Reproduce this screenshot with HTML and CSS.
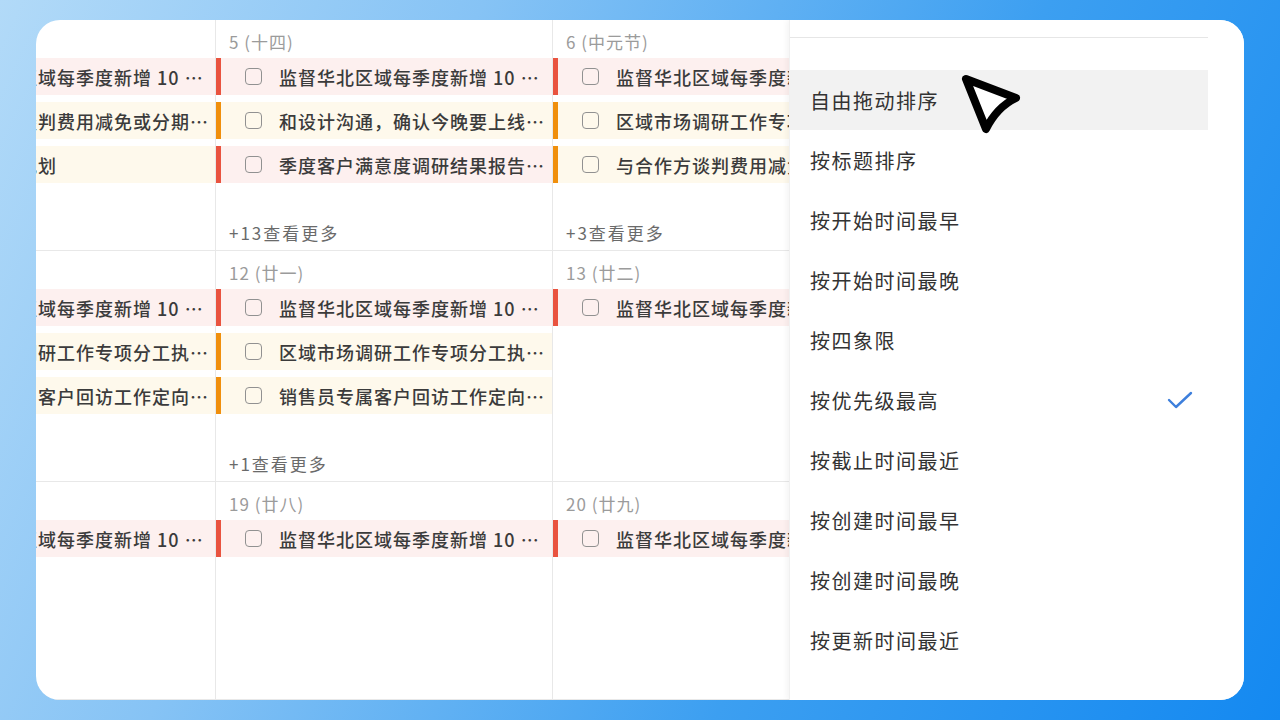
FILE: index.html
```html
<!DOCTYPE html>
<html>
<head>
  <meta charset="UTF-8">
  <title>日历视图 - 排序</title>
  <link rel="stylesheet" href="styles.css">
</head>
<body>
  <div class="card">
    <!-- Calendar month grid -->
    <div class="calendar">
      <!-- Week 1 -->
      <div class="day day-clipped">
        <div class="day-inner">
          <div class="day-title">4 (十三)</div>
          <div class="task task-red"><span class="checkbox"></span><span class="task-text">监督华北区域每季度新增 10 个客户</span></div>
          <div class="task task-orange"><span class="checkbox"></span><span class="task-text">与合作方谈判费用减免或分期付款</span></div>
          <div class="task task-orange"><span class="checkbox"></span><span class="task-text">年度销售规划</span></div>
        </div>
      </div>
      <div class="day">
        <div class="day-inner">
          <div class="day-title">5 (十四)</div>
          <div class="task task-red"><span class="checkbox"></span><span class="task-text">监督华北区域每季度新增 10 个客户</span></div>
          <div class="task task-orange"><span class="checkbox"></span><span class="task-text">和设计沟通，确认今晚要上线的需求</span></div>
          <div class="task task-red"><span class="checkbox"></span><span class="task-text">季度客户满意度调研结果报告整理</span></div>
          <div class="more">+13查看更多</div>
        </div>
      </div>
      <div class="day day-under-menu">
        <div class="day-inner">
          <div class="day-title">6 (中元节)</div>
          <div class="task task-red"><span class="checkbox"></span><span class="task-text">监督华北区域每季度新增 10 个客户</span></div>
          <div class="task task-orange"><span class="checkbox"></span><span class="task-text">区域市场调研工作专项分工执行方案</span></div>
          <div class="task task-orange"><span class="checkbox"></span><span class="task-text">与合作方谈判费用减免或分期付款</span></div>
          <div class="more">+3查看更多</div>
        </div>
      </div>

      <!-- Week 2 -->
      <div class="day day-clipped">
        <div class="day-inner">
          <div class="day-title">11 (二十)</div>
          <div class="task task-red"><span class="checkbox"></span><span class="task-text">监督华北区域每季度新增 10 个客户</span></div>
          <div class="task task-orange"><span class="checkbox"></span><span class="task-text">区域市场调研工作专项分工执行方案</span></div>
          <div class="task task-orange"><span class="checkbox"></span><span class="task-text">销售员专属客户回访工作定向跟进</span></div>
        </div>
      </div>
      <div class="day">
        <div class="day-inner">
          <div class="day-title">12 (廿一)</div>
          <div class="task task-red"><span class="checkbox"></span><span class="task-text">监督华北区域每季度新增 10 个客户</span></div>
          <div class="task task-orange"><span class="checkbox"></span><span class="task-text">区域市场调研工作专项分工执行方案</span></div>
          <div class="task task-orange"><span class="checkbox"></span><span class="task-text">销售员专属客户回访工作定向跟进</span></div>
          <div class="more">+1查看更多</div>
        </div>
      </div>
      <div class="day day-under-menu">
        <div class="day-inner">
          <div class="day-title">13 (廿二)</div>
          <div class="task task-red"><span class="checkbox"></span><span class="task-text">监督华北区域每季度新增 10 个客户</span></div>
        </div>
      </div>

      <!-- Week 3 -->
      <div class="day day-clipped">
        <div class="day-inner">
          <div class="day-title">18 (廿七)</div>
          <div class="task task-red"><span class="checkbox"></span><span class="task-text">监督华北区域每季度新增 10 个客户</span></div>
        </div>
      </div>
      <div class="day">
        <div class="day-inner">
          <div class="day-title">19 (廿八)</div>
          <div class="task task-red"><span class="checkbox"></span><span class="task-text">监督华北区域每季度新增 10 个客户</span></div>
        </div>
      </div>
      <div class="day day-under-menu">
        <div class="day-inner">
          <div class="day-title">20 (廿九)</div>
          <div class="task task-red"><span class="checkbox"></span><span class="task-text">监督华北区域每季度新增 10 个客户</span></div>
        </div>
      </div>
    </div>

    <!-- Sort menu -->
    <div class="sort-menu">
      <div class="menu-divider"></div>
      <div class="menu-list">
        <div class="menu-item hover">自由拖动排序</div>
        <div class="menu-item">按标题排序</div>
        <div class="menu-item">按开始时间最早</div>
        <div class="menu-item">按开始时间最晚</div>
        <div class="menu-item">按四象限</div>
        <div class="menu-item">
          <span>按优先级最高</span>
          <svg class="check" width="26" height="20" viewBox="0 0 26 20">
            <polyline points="2,10 9,17 24,3" fill="none" stroke="#3d7fdc" stroke-width="2.4" stroke-linecap="round" stroke-linejoin="round"/>
          </svg>
        </div>
        <div class="menu-item">按截止时间最近</div>
        <div class="menu-item">按创建时间最早</div>
        <div class="menu-item">按创建时间最晚</div>
        <div class="menu-item">按更新时间最近</div>
      </div>
    </div>
  </div>

  <!-- Mouse pointer -->
  <svg class="pointer" width="80" height="75" viewBox="0 0 80 75">
    <path d="M16 14 L66 33 Q47 42 36 64 Z" fill="#fff" stroke="#000" stroke-width="8" stroke-linejoin="round"/>
  </svg>
</body>
</html>
```

FILE: styles.css
```css
body {
  margin: 0;
  padding: 20px 36px;
  height: 720px;
  box-sizing: border-box;
  font-family: "Noto Sans CJK SC", "Noto Sans", sans-serif;
  background: linear-gradient(115deg, #b2daf8 0%, #86c3f5 30%, #3c9ff1 65%, #1489f1 100%);
  overflow: hidden;
}

/* Card */
.card {
  height: 680px;
  background: #fff;
  border-radius: 24px;
  overflow: hidden;
  display: flex;
}

/* Calendar grid */
.calendar {
  display: grid;
  grid-template-columns: 180px 337px 236px;
  grid-template-rows: 231px 231px 1fr;
  flex: none;
}

.day {
  border-right: 1px solid #e8e8e8;
  border-bottom: 1px solid #e8e8e8;
  overflow: hidden;
  min-width: 0;
}

.day-under-menu {
  border-right: none;
}

.day-inner {
  height: 100%;
  width: 336px;
  display: flex;
  flex-direction: column;
  padding-bottom: 5px;
  box-sizing: border-box;
}

.day-clipped .day-inner {
  margin-left: -156px;
}

.day-title {
  padding: 11px 13px 0;
  font-size: 17px;
  letter-spacing: 1px;
  line-height: 22px;
  color: #9b9b9b;
  margin-bottom: 5px;
}

/* Tasks */
.task {
  height: 37px;
  display: flex;
  align-items: center;
  margin-bottom: 7px;
  border-left: 5px solid;
  flex: none;
}

.task-red {
  background: #fdf0ef;
  border-color: #e9533f;
}

.task-orange {
  background: #fef9ec;
  border-color: #f08f0c;
}

.checkbox {
  width: 17px;
  height: 17px;
  box-sizing: border-box;
  border: 1.5px solid #919191;
  border-radius: 4px;
  margin-left: 24px;
  margin-right: 17px;
  flex: none;
}

.task-text {
  flex: 1;
  min-width: 0;
  white-space: nowrap;
  overflow: hidden;
  text-overflow: ellipsis;
  padding-right: 4px;
  font-size: 18px;
  letter-spacing: 1px;
  font-weight: 500;
  color: #3b3b3b;
}

.more {
  margin-top: auto;
  padding-left: 13px;
  font-size: 17px;
  line-height: 24px;
  letter-spacing: 2px;
  color: #6a6a6a;
}

/* Sort menu */
.sort-menu {
  flex: 1;
  background: #fff;
  padding: 17px 36px 0 0;
  box-shadow: -2px 0 6px rgba(0, 0, 0, 0.05);
  border-left: 1px solid #f0f0f0;
  position: relative;
}

.menu-divider {
  height: 1px;
  background: #e6e6e6;
}

.menu-list {
  margin-top: 32px;
}

.menu-item {
  height: 60px;
  display: flex;
  align-items: center;
  justify-content: space-between;
  padding: 0 15px 0 20px;
  font-size: 20px;
  letter-spacing: 1.5px;
  color: #333;
}

.menu-item.hover {
  background: #f2f2f2;
}

.check {
  display: block;
}

/* Pointer overlay */
.pointer {
  position: absolute;
  left: 950px;
  top: 65px;
}
```
